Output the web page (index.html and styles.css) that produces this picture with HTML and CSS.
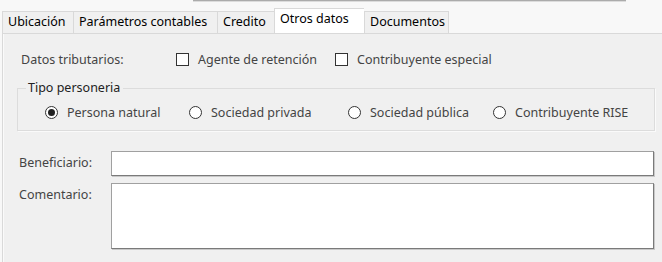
FILE: index.html
```html
<!DOCTYPE html>
<html>
<head>
<meta charset="utf-8">
<title>Otros datos</title>
<link rel="stylesheet" href="styles.css">
</head>
<body>

<div class="top-edge"></div>

<div class="tabs">
  <div class="tab">Ubicación</div>
  <div class="tab">Parámetros contables</div>
  <div class="tab">Credito</div>
  <div class="tab active">Otros datos</div>
  <div class="tab">Documentos</div>
</div>

<section class="panel">
  <div class="row tributos">
    <span class="label">Datos tributarios:</span>
    <label class="check c1"><span class="box"></span>Agente de retención</label>
    <label class="check"><span class="box"></span>Contribuyente especial</label>
  </div>

  <fieldset class="group">
    <legend>Tipo personeria</legend>
    <div class="radios">
      <label class="radio r1"><span class="dot checked"></span>Persona natural</label>
      <label class="radio r2"><span class="dot"></span>Sociedad privada</label>
      <label class="radio r3"><span class="dot"></span>Sociedad pública</label>
      <label class="radio r4"><span class="dot"></span>Contribuyente RISE</label>
    </div>
  </fieldset>

  <div class="row field first">
    <span class="field-label">Beneficiario:</span>
    <div class="input"></div>
  </div>
  <div class="row field">
    <span class="field-label">Comentario:</span>
    <div class="input textarea"></div>
  </div>
</section>

</body>
</html>
```

FILE: styles.css
```css
body {
  background-color: #f8f8f8;
  color: #000;
  font-family: 'Noto Sans', 'Open Sans', sans-serif;
  font-size: 12.5px;
  margin: 0;
  overflow: hidden;
  padding: 0;
}

/* Edge of the control sitting above the tabs */
.top-edge {
  border-bottom: 1px solid #ababab;
  box-shadow: 0 1px 0 #dcdcdc;
  height: 0;
  margin-left: 193px;
  width: 433px;
}


/* Tab strip */
.tabs {
  align-items: flex-end;
  display: flex;
  height: 32px;
  padding-left: 2px;
}
.tab {
  background-color: #f0f0f0;
  border: 1px solid #d9d9d9;
  border-bottom: none;
  border-right: none;
  box-sizing: border-box;
  height: 22px;
  line-height: 20px;
  padding: 0 5px;
  white-space: nowrap;
}
.tab:nth-child(1) { width: 71px; }
.tab:nth-child(2) { width: 144px; }
.tab:nth-child(3) { width: 57px; }
.tab:nth-child(5) { width: 85px; border-right: 1px solid #d9d9d9; }
.tab.active {
  background-color: #fff;
  height: 25px;
  line-height: 20px;
  width: 90px;
}


/* Tab body */
.panel {
  background-color: #f0f0f0;
  border-left: 1px solid #d9d9d9;
  border-top: 1px solid #d9d9d9;
  box-shadow: inset 1px 0 0 #fafafa;
  color: #444;
  height: 211px;
  margin-left: 2px;
  padding: 17px 8px 0 14px;
}

.row {
  align-items: center;
  display: flex;
}
.tributos {
  height: 16px;
  padding-left: 4px;
}
.label {
  width: 155px;
}
.check {
  align-items: center;
  display: flex;
}
.c1 {
  width: 159px;
}
.box {
  background-color: #fff;
  border: 1px solid #333;
  box-sizing: border-box;
  height: 13px;
  margin-right: 9px;
  width: 13px;
}

.group {
  border: 1px solid #dcdcdc;
  box-shadow: 1px 1px 0 #fafafa;
  margin: 14px 0 0 0;
  padding: 0;
  width: 636px;
}
.group legend {
  color: #222;
  line-height: 14px;
  margin-left: 8px;
  padding: 0 3px 0 2px;
}
.radios {
  align-items: center;
  display: flex;
  height: 35px;
  padding-left: 27px;
}
.radio {
  align-items: center;
  display: flex;
}
.r1 { width: 144px; }
.r2 { width: 159px; }
.r3 { width: 145px; }
.dot {
  background-color: #fff;
  border: 1px solid #333;
  border-radius: 50%;
  box-sizing: border-box;
  height: 13px;
  margin-right: 9px;
  position: relative;
  width: 13px;
}
.dot.checked::after {
  background-color: #222;
  border-radius: 50%;
  content: '';
  height: 7px;
  left: 2px;
  position: absolute;
  top: 2px;
  width: 7px;
}

.field {
  align-items: flex-start;
  margin-top: 7px;
  padding-left: 2px;
}
.field.first {
  margin-top: 20px;
}
.field-label {
  line-height: 24px;
  width: 92px;
}
.input {
  background-color: #fff;
  border: 1px solid #7a7a7a;
  border-left-color: #a0a0a0;
  border-top-color: #a0a0a0;
  box-shadow: 1px 1px 0 #c8c8c8;
  box-sizing: border-box;
  height: 25px;
  width: 544px;
}
.input.textarea {
  height: 66px;
}
```
